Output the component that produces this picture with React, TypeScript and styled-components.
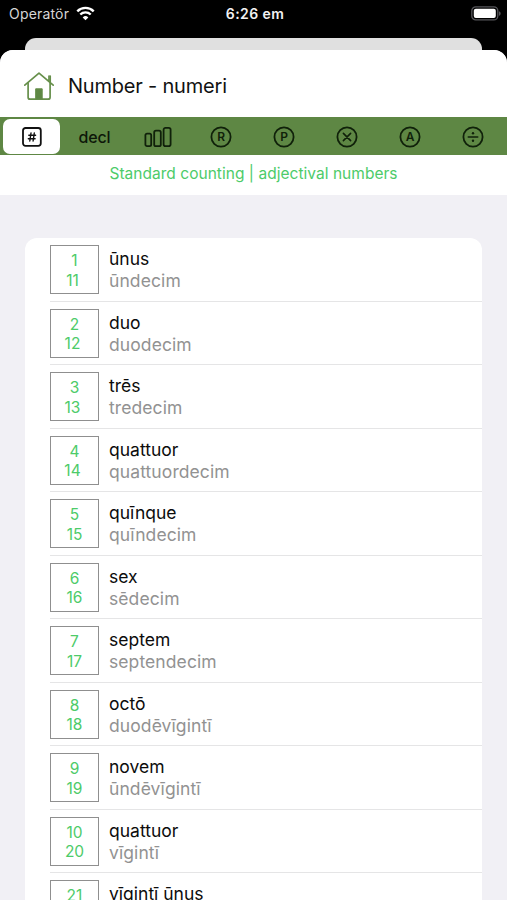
import React from 'react';
import styled, { createGlobalStyle } from 'styled-components';

const GlobalStyle = createGlobalStyle`
  * { box-sizing: border-box; }
  html, body { margin: 0; background: #000; }
  body { font-family: Inter, "Liberation Sans", sans-serif; overflow: hidden; }
`;

const Screen = styled.div`
  width: 507px;
  height: 900px;
  display: flex;
  flex-direction: column;
  overflow: hidden;
  background: #000;
`;

const StatusBar = styled.header`
  flex: none;
  height: 38px;
  padding: 0 6px 11px 9px;
  display: grid;
  grid-template-columns: 1fr auto 1fr;
  align-items: center;
  color: #fff;
`;

const Carrier = styled.div`
  display: flex;
  align-items: center;
  gap: 7px;
  font-size: 14px;
  letter-spacing: 0.18px;
  color: #d6d6d6;
`;

const Clock = styled.div`
  font-size: 14px;
  font-weight: 600;
  letter-spacing: 0.4px;
  color: #f2f2f2;
`;

const Battery = styled.div`
  display: flex;
  justify-content: flex-end;
  height: 15px;
`;

const BackSheet = styled.div`
  flex: none;
  height: 12px;
  margin: 0 25px;
  border-radius: 11px 11px 0 0;
  background: #e0e0e0;
`;

const Sheet = styled.main`
  flex: 1;
  min-height: 0;
  display: flex;
  flex-direction: column;
  overflow: hidden;
  border-radius: 13px 13px 0 0;
  background: #f1f0f5;
`;

const TitleBar = styled.div`
  flex: none;
  height: 67px;
  padding: 4px 0 0 23px;
  display: flex;
  align-items: center;
  gap: 13px;
  background: #fff;
`;

const Title = styled.h1`
  margin: 0;
  font-size: 20px;
  font-weight: 400;
  line-height: 24px;
  letter-spacing: -0.2px;
  color: #111;
`;

const Tabs = styled.nav`
  flex: none;
  height: 38px;
  padding: 2px 2px 1px 1px;
  display: grid;
  grid-template-columns: repeat(8, 1fr);
  background: #5e8744;
`;

const Tab = styled.button<{ $active?: boolean }>`
  margin: 0 4px 0 2px;
  padding: 0;
  border: 0;
  border-radius: 7px;
  display: flex;
  align-items: center;
  justify-content: center;
  font: 500 16px Inter, sans-serif;
  letter-spacing: -0.2px;
  color: #0d1709;
  background: ${(p) => (p.$active ? '#fff' : 'transparent')};
`;

const Caption = styled.p`
  flex: none;
  height: 40px;
  margin: 0;
  font-size: 15.5px;
  line-height: 37px;
  letter-spacing: 0.03px;
  text-align: center;
  color: #4dcb69;
  background: #fff;
`;

const List = styled.ul`
  flex: none;
  margin: 43px 25px 0;
  padding: 0 0 0 25px;
  list-style: none;
  border-radius: 12px;
  background: #fff;
`;

const Row = styled.li`
  height: 63.5px;
  padding-top: 7px;
  display: flex;
  align-items: flex-start;
  gap: 10px;
  border-bottom: 1px solid #e5e5e6;
`;

const NumberBox = styled.div`
  width: 49px;
  height: 49px;
  padding-top: 5px;
  border: 1px solid #8f8f8f;
  font-size: 15.5px;
  line-height: 19.5px;
  text-align: center;
  color: #4dcb69;
`;

const Numeral = styled.div<{ $trailing?: boolean }>`
  padding-right: ${(p) => (p.$trailing ? '4px' : '0')};
`;

const Words = styled.div`
  padding-top: 3px;
  font-size: 17.5px;
  line-height: 22px;
  white-space: nowrap;
`;

const Word = styled.div`
  color: #0c0c0c;
`;

const TeenWord = styled.div`
  letter-spacing: 0.09px;
  color: #929292;
`;

const WifiIcon = () => (
  <svg width="19" height="15" viewBox="0 0 19 15" fill="none" stroke="#fff" strokeWidth="2.4">
    <path d="M1.3 5.3a11.6 11.6 0 0 1 16.4 0" />
    <path d="M4.3 8.5a7.4 7.4 0 0 1 10.4 0" />
    <path d="M9.5 14.2 6.7 11.4a4 4 0 0 1 5.6 0Z" fill="#fff" stroke="none" />
  </svg>
);

const BatteryIcon = () => (
  <svg width="30" height="15" viewBox="0 0 30 15">
    <rect x=".8" y=".9" width="26" height="13" rx="4" fill="none" stroke="#56565a" strokeWidth="1.3" />
    <rect x="2.8" y="2.7" width="22" height="9.4" rx="2" fill="#fff" />
    <path d="M28 5.2c2.2.8 2.2 3.8 0 4.6Z" fill="#56565a" />
  </svg>
);

const HouseIcon = () => (
  <svg width="32" height="30" viewBox="0 0 32 30" fill="none" stroke="#668f4a" strokeWidth="1.7" strokeLinecap="round" strokeLinejoin="round">
    <path d="M1.8 14.2 16 2.2l14.2 12M26 10.2V5" />
    <path d="M27.2 5v6.2" />
    <path d="M5.1 12v14.2a2 2 0 0 0 2 2h18a2 2 0 0 0 2-2V12" />
    <path d="M13 17.8h6.2v10.4H13z" fill="#5e8744" strokeWidth="1" />
  </svg>
);

const HashIcon = () => (
  <svg width="20" height="20" viewBox="0 0 20 20" fill="none" stroke="#111" strokeWidth="1.8" strokeLinecap="round">
    <rect x="1" y="1" width="17.8" height="17.8" rx="2.5" />
    <path d="M9 6 7.8 14M12.3 6l-1.2 8M6.8 8.3h6.8M6.3 11.7h6.8" strokeWidth="1.4" />
  </svg>
);

const BarsIcon = () => (
  <svg width="28" height="22" viewBox="0 0 28 22" fill="none" stroke="#10210a" strokeWidth="1.8">
    <rect x="1.4" y="7.7" width="5.8" height="12.5" rx="1.6" />
    <rect x="10.2" y="4.7" width="6.6" height="15.5" rx="1.8" />
    <rect x="19.6" y="1.9" width="7" height="18.3" rx="1.9" />
  </svg>
);

const Ring = ({ children }: { children: React.ReactNode }) => (
  <svg width="22" height="22" viewBox="0 0 22 22" fill="none" stroke="#10210a" strokeWidth="1.8" strokeLinecap="round">
    <circle cx="11" cy="11" r="9.6" />
    {children}
  </svg>
);

const RingLetter = ({ letter }: { letter: string }) => (
  <Ring>
    <text x="11" y="15.3" fontSize="12" fontWeight="600" textAnchor="middle" fill="#10210a" stroke="none">
      {letter}
    </text>
  </Ring>
);

const tabs: React.ReactNode[] = [
  <HashIcon />,
  'decl',
  <BarsIcon />,
  <RingLetter letter="R" />,
  <RingLetter letter="P" />,
  <Ring><path d="m7.4 7.4 7.2 7.2m0-7.2-7.2 7.2" strokeWidth="1.6" /></Ring>,
  <RingLetter letter="A" />,
  <Ring>
    <path d="M6.3 11h9.4" strokeWidth="1.6" />
    <circle cx="11" cy="7.2" r="1.2" fill="#10210a" stroke="none" />
    <circle cx="11" cy="14.8" r="1.2" fill="#10210a" stroke="none" />
  </Ring>,
];

interface Entry {
  n: number;
  word: string;
  second?: number;
  secondWord?: string;
  trailing?: boolean;
}

const entries: Entry[] = [
  { n: 1, word: 'ūnus', second: 11, secondWord: 'ūndecim', trailing: true },
  { n: 2, word: 'duo', second: 12, secondWord: 'duodecim', trailing: true },
  { n: 3, word: 'trēs', second: 13, secondWord: 'tredecim', trailing: true },
  { n: 4, word: 'quattuor', second: 14, secondWord: 'quattuordecim', trailing: true },
  { n: 5, word: 'quīnque', second: 15, secondWord: 'quīndecim' },
  { n: 6, word: 'sex', second: 16, secondWord: 'sēdecim' },
  { n: 7, word: 'septem', second: 17, secondWord: 'septendecim' },
  { n: 8, word: 'octō', second: 18, secondWord: 'duodēvīgintī' },
  { n: 9, word: 'novem', second: 19, secondWord: 'ūndēvīgintī' },
  { n: 10, word: 'quattuor', second: 20, secondWord: 'vīgintī' },
  { n: 21, word: 'vīgintī ūnus' },
];

export default function App() {
  return (
    <Screen>
      <GlobalStyle />
      <StatusBar>
        <Carrier>Operatör <WifiIcon /></Carrier>
        <Clock>6:26 em</Clock>
        <Battery><BatteryIcon /></Battery>
      </StatusBar>
      <BackSheet />
      <Sheet>
        <TitleBar>
          <HouseIcon />
          <Title>Number - numeri</Title>
        </TitleBar>
        <Tabs>
          {tabs.map((tab, i) => (
            <Tab key={i} $active={i === 0}>{tab}</Tab>
          ))}
        </Tabs>
        <Caption>Standard counting | adjectival numbers</Caption>
        <List>
          {entries.map((e) => (
            <Row key={e.n}>
              <NumberBox>
                <Numeral>{e.n}</Numeral>
                <Numeral $trailing={e.trailing}>{e.second}</Numeral>
              </NumberBox>
              <Words>
                <Word>{e.word}</Word>
                <TeenWord>{e.secondWord}</TeenWord>
              </Words>
            </Row>
          ))}
        </List>
      </Sheet>
    </Screen>
  );
}
